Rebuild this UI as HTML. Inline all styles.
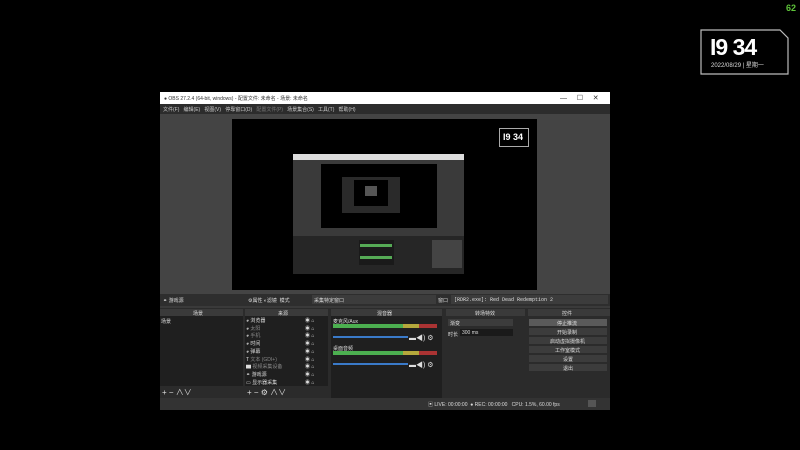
<!DOCTYPE html><html><head><meta charset="utf-8"><style>
*{margin:0;padding:0;box-sizing:border-box}
body{width:800px;height:450px;background:#000;position:relative;overflow:hidden;font-family:"Liberation Sans","Noto Sans CJK SC",sans-serif;color:#ddd}
.a{position:absolute}
.t{font-size:5px;white-space:nowrap}
</style></head><body>
<div class="a" style="left:786px;top:3px;color:#5ec43a;font-size:9px;font-weight:bold">62</div>
<svg class="a" style="left:698px;top:28px" width="92" height="48"><path d="M3 2H82L90 10V46H3Z" fill="#000" stroke="#bbb" stroke-width="1.2"/></svg>
<div class="a" style="left:710px;top:34px;color:#fff;font-size:23px;font-weight:bold;letter-spacing:-1px">I9 34</div>
<div class="a" style="left:711px;top:60px;color:#ddd;font-size:6px">2022/08/29 | 星期一</div>

<div class="a" style="left:160px;top:92px;width:450px;height:318px;background:#3a3a3a"></div>
<div class="a" style="left:160px;top:92px;width:450px;height:12px;background:#fff"></div>
<div class="a t" style="left:164px;top:95px;color:#333">● OBS 27.2.4 (64-bit, windows) - 配置文件: 未命名 - 场景: 未命名</div>
<div class="a t" style="left:560px;top:94px;color:#333;font-size:7px">—&nbsp;&nbsp;&nbsp;&nbsp;&nbsp;☐&nbsp;&nbsp;&nbsp;&nbsp;&nbsp;✕</div>
<div class="a" style="left:160px;top:104px;width:450px;height:10px;background:#2c2c2c"></div>
<div class="a t" style="left:163px;top:106px;color:#ccc">文件(F)&nbsp;&nbsp; 编辑(E)&nbsp;&nbsp; 视图(V)&nbsp;&nbsp; 停靠窗口(D)&nbsp;&nbsp; <span style="color:#777">配置文件(P)</span>&nbsp;&nbsp; 场景集合(S)&nbsp;&nbsp; 工具(T)&nbsp;&nbsp; 帮助(H)</div>
<div class="a" style="left:160px;top:114px;width:450px;height:180px;background:#444"></div>
<div class="a" style="left:232px;top:119px;width:305px;height:171px;background:#000"></div>
<div class="a" style="left:499px;top:128px;width:30px;height:19px;border:1px solid #aaa;color:#fff;font-size:9px;font-weight:bold;padding-left:3px;line-height:16px">I9 34</div>
<div class="a" style="left:293px;top:154px;width:171px;height:6px;background:#ddd"></div>
<div class="a" style="left:293px;top:160px;width:171px;height:114px;background:#3a3a3a"></div>
<div class="a" style="left:321px;top:164px;width:116px;height:64px;background:#000"></div>
<div class="a" style="left:342px;top:177px;width:58px;height:36px;background:#2a2a2a"></div>
<div class="a" style="left:354px;top:180px;width:34px;height:26px;background:#000"></div>
<div class="a" style="left:365px;top:186px;width:12px;height:10px;background:#555"></div>
<div class="a" style="left:293px;top:236px;width:171px;height:38px;background:#262626"></div>
<div class="a" style="left:359px;top:240px;width:35px;height:25px;background:#1a1a1a"></div>
<div class="a" style="left:360px;top:244px;width:32px;height:3px;background:#5a5"></div>
<div class="a" style="left:360px;top:256px;width:32px;height:3px;background:#5a5"></div>
<div class="a" style="left:432px;top:240px;width:30px;height:28px;background:#444"></div>

<div class="a" style="left:160px;top:294px;width:450px;height:12px;background:#2e2e2e"></div>
<div class="a t" style="left:163px;top:297px">⚭ 游戏源</div>
<div class="a t" style="left:248px;top:297px">⚙属性 ◐滤镜 &nbsp;模式</div>
<div class="a" style="left:312px;top:295px;width:124px;height:9px;background:#3c3c3c"></div>
<div class="a t" style="left:314px;top:297px">采集特定窗口</div>
<div class="a t" style="left:438px;top:297px">窗口</div>
<div class="a" style="left:451px;top:295px;width:157px;height:9px;background:#3c3c3c"></div>
<div class="a t" style="left:454px;top:297px;font-family:'Liberation Mono',monospace">[RDR2.exe]: Red Dead Redemption 2</div>

<div class="a" style="left:160px;top:308px;width:450px;height:90px;background:#2b2b2b"></div>
<div class="a" style="left:160px;top:309px;width:83px;height:7px;background:#3a3a3a"></div>
<div class="a" style="left:245px;top:309px;width:83px;height:7px;background:#3a3a3a"></div>
<div class="a" style="left:331px;top:309px;width:111px;height:7px;background:#3a3a3a"></div>
<div class="a" style="left:446px;top:309px;width:79px;height:7px;background:#3a3a3a"></div>
<div class="a" style="left:528px;top:309px;width:82px;height:7px;background:#3a3a3a"></div>
<div class="a t" style="left:193px;top:310px">场景</div>
<div class="a t" style="left:278px;top:310px">来源</div>
<div class="a t" style="left:377px;top:310px">混音器</div>
<div class="a t" style="left:475px;top:310px">转场特效</div>
<div class="a t" style="left:562px;top:310px">控件</div>
<div class="a" style="left:160px;top:316px;width:83px;height:70px;background:#1f1f1f"></div>
<div class="a t" style="left:161px;top:318px">场景</div>
<div class="a t" style="left:162px;top:387px;font-size:8px">+ − ∧∨</div>
<div class="a" style="left:245px;top:316px;width:83px;height:70px;background:#1f1f1f"></div>
<div class="a t" style="left:246px;top:318px;line-height:7.7px">◕ 浏览器<br>◕ <span style="color:#888">太阳</span><br>◕ <span style="color:#888">手机</span><br>◕ 时间<br>◕ 弹幕<br>T <span style="color:#888">文本 (GDI+)</span><br>▆ <span style="color:#888">视频采集设备</span><br>⚭ 游戏源<br>▭ 显示器采集</div>
<div class="a t" style="left:305px;top:318px;line-height:7.7px">◉ ⌂<br>◉ ⌂<br>◉ ⌂<br>◉ ⌂<br>◉ ⌂<br>◉ ⌂<br>◉ ⌂<br>◉ ⌂<br>◉ ⌂</div>
<div class="a t" style="left:247px;top:387px;font-size:8px">+ − ⚙ ∧∨</div>
<div class="a" style="left:331px;top:316px;width:111px;height:82px;background:#1f1f1f"></div>
<div class="a t" style="left:333px;top:318px">麦克风/Aux</div>
<div class="a" style="left:333px;top:324px;width:70px;height:4px;background:#4caf50"></div>
<div class="a" style="left:403px;top:324px;width:16px;height:4px;background:#b5a83c"></div>
<div class="a" style="left:419px;top:324px;width:18px;height:4px;background:#a33"></div>
<div class="a" style="left:333px;top:336px;width:75px;height:2px;background:#3a7ac9"></div>
<div class="a t" style="left:409px;top:333px;font-size:7px">▬◀) ⚙</div>
<div class="a t" style="left:333px;top:345px">桌面音频</div>
<div class="a" style="left:333px;top:351px;width:70px;height:4px;background:#4caf50"></div>
<div class="a" style="left:403px;top:351px;width:16px;height:4px;background:#b5a83c"></div>
<div class="a" style="left:419px;top:351px;width:18px;height:4px;background:#a33"></div>
<div class="a" style="left:333px;top:363px;width:75px;height:2px;background:#3a7ac9"></div>
<div class="a t" style="left:409px;top:360px;font-size:7px">▬◀) ⚙</div>
<div class="a" style="left:448px;top:319px;width:65px;height:7px;background:#3c3c3c"></div>
<div class="a t" style="left:450px;top:320px">渐变</div>
<div class="a t" style="left:448px;top:331px">时长</div>
<div class="a" style="left:460px;top:329px;width:53px;height:7px;background:#1a1a1a"></div>
<div class="a t" style="left:462px;top:330px">300 ms</div>
<div class="a" style="left:529px;top:319px;width:78px;height:7px;background:#5a5a5a"></div>
<div class="a t" style="left:557px;top:320px">停止推流</div>
<div class="a" style="left:529px;top:328px;width:78px;height:7px;background:#3c3c3c"></div>
<div class="a t" style="left:557px;top:329px">开始录制</div>
<div class="a" style="left:529px;top:337px;width:78px;height:7px;background:#3c3c3c"></div>
<div class="a t" style="left:550px;top:338px">启动虚拟摄像机</div>
<div class="a" style="left:529px;top:346px;width:78px;height:7px;background:#3c3c3c"></div>
<div class="a t" style="left:555px;top:347px">工作室模式</div>
<div class="a" style="left:529px;top:355px;width:78px;height:7px;background:#3c3c3c"></div>
<div class="a t" style="left:563px;top:356px">设置</div>
<div class="a" style="left:529px;top:364px;width:78px;height:7px;background:#3c3c3c"></div>
<div class="a t" style="left:563px;top:365px">退出</div>
<div class="a" style="left:160px;top:398px;width:450px;height:12px;background:#333"></div>
<div class="a t" style="left:428px;top:401px">▣ LIVE: 00:00:00 &nbsp;● REC: 00:00:00 &nbsp;&nbsp;CPU: 1.5%, 60.00 fps</div>
<div class="a" style="left:588px;top:400px;width:8px;height:7px;background:#555"></div>
</body></html>
